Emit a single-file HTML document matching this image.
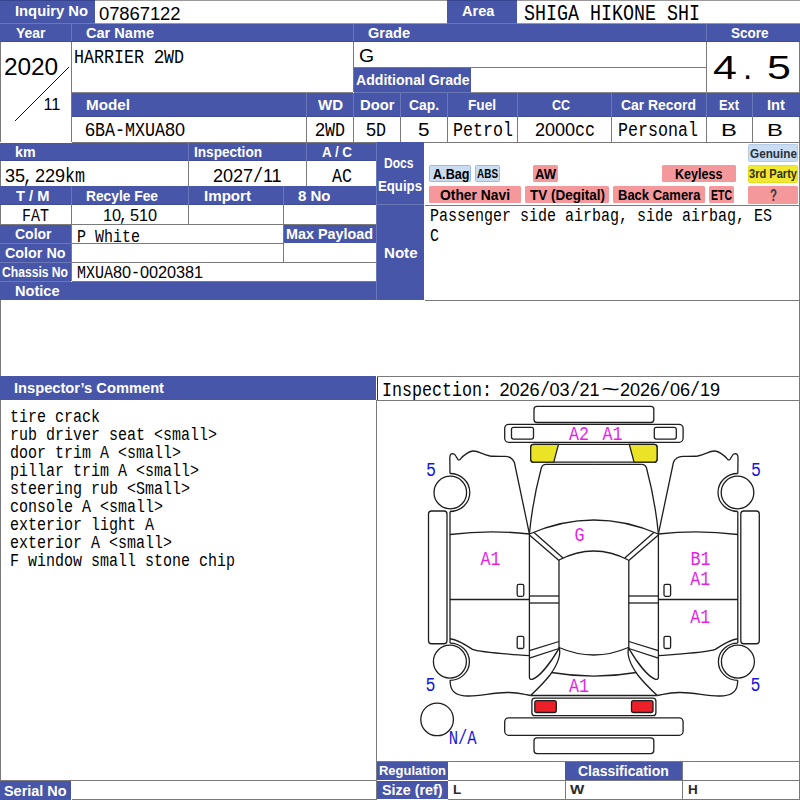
<!DOCTYPE html>
<html><head><meta charset="utf-8"><title>Sheet</title>
<style>
html,body{margin:0;padding:0;background:#fff;}
body{width:800px;height:800px;position:relative;overflow:hidden;font-family:"Liberation Sans",sans-serif;}
.a{position:absolute;}
.s{font-family:"Liberation Sans",sans-serif;font-weight:bold;white-space:pre;line-height:1;transform-origin:left top;}
.m{font-family:"Liberation Mono",monospace;white-space:pre;line-height:1;transform-origin:left top;}
.n{font-family:"Liberation Sans",sans-serif;white-space:pre;line-height:1;transform-origin:left top;}
</style></head><body>
<div class="a" style="left:95px;top:0px;width:352px;height:1px;background:#999"></div>
<div class="a" style="left:0px;top:0px;width:95px;height:23px;background:#4756a8;"></div>
<div class="a s" style="left:15.00px;top:3.96px;font-size:14px;color:#fff;transform:scaleX(1.0545)">Inquiry No</div>
<div class="a n" style="left:98.97px;top:4.81px;font-size:18.46px;letter-spacing:-0.069px;color:#000">07867122</div>
<div class="a" style="left:447px;top:0px;width:70px;height:23px;background:#4756a8;"></div>
<div class="a s" style="left:462.00px;top:4.16px;font-size:14px;color:#fff;transform:scaleX(1.0387)">Area</div>
<div class="a m" style="left:524.00px;top:4px;font-size:22px;color:#000;transform:scale(0.8333,1.0)">SHIGA HIKONE SHI</div>
<div class="a" style="left:95px;top:23px;width:352px;height:1px;background:#999"></div>
<div class="a" style="left:517px;top:23px;width:283px;height:1px;background:#999"></div>
<div class="a" style="left:0px;top:23px;width:95px;height:1px;background:#6b78b8"></div>
<div class="a" style="left:447px;top:23px;width:70px;height:1px;background:#6b78b8"></div>
<div class="a" style="left:0px;top:0px;width:95px;height:1px;background:#36448f"></div>
<div class="a" style="left:447px;top:0px;width:70px;height:1px;background:#36448f"></div>
<div class="a" style="left:517px;top:0px;width:283px;height:1px;background:#999"></div>
<div class="a" style="left:0px;top:24px;width:800px;height:18px;background:#4756a8;"></div>
<div class="a s" style="left:15.50px;top:26.16px;font-size:14px;color:#fff;transform:scaleX(0.9963)">Year</div>
<div class="a s" style="left:86.00px;top:26.16px;font-size:14px;color:#fff;transform:scaleX(1.0401)">Car Name</div>
<div class="a s" style="left:368.00px;top:26.16px;font-size:14px;color:#fff;transform:scaleX(1.0381)">Grade</div>
<div class="a s" style="left:730.50px;top:26.16px;font-size:14px;color:#fff;transform:scaleX(0.9635)">Score</div>
<div class="a" style="left:71px;top:24px;width:1px;height:18px;background:#6b78b8"></div>
<div class="a" style="left:353px;top:24px;width:1px;height:18px;background:#6b78b8"></div>
<div class="a" style="left:706px;top:24px;width:1px;height:18px;background:#6b78b8"></div>
<div class="a" style="left:0px;top:41px;width:800px;height:1px;background:#404c94"></div>
<div class="a" style="left:0px;top:42px;width:1px;height:100px;background:#7a7a7a"></div>
<div class="a" style="left:71px;top:42px;width:1px;height:100px;background:#7a7a7a"></div>
<div class="a n" style="left:3.95px;top:55.02px;font-size:24.44px;letter-spacing:-0.091px;color:#000">2020</div>
<div class="a n" style="left:43.47px;top:96.01px;font-size:16.29px;letter-spacing:-0.061px;color:#000">11</div>
<svg class="a" style="left:0;top:42px" width="72" height="100"><line x1="15" y1="79" x2="69" y2="25" stroke="#111" stroke-width="1"/></svg>
<div class="a m" style="left:74.00px;top:48px;font-size:20px;color:#000;transform:scale(0.8333,1.0)">HARRIER </div>
<div class="a n" style="left:153.96px;top:48.01px;font-size:18.10px;letter-spacing:-0.068px;color:#000">2</div>
<div class="a m" style="left:164.00px;top:48px;font-size:20px;color:#000;transform:scale(0.8333,1.0)">WD</div>
<div class="a" style="left:353px;top:42px;width:1px;height:50px;background:#7a7a7a"></div>
<div class="a n" style="left:359px;top:47px;font-size:18px;color:#000;transform:scale(1.08,1.0)">G</div>
<div class="a" style="left:354px;top:67px;width:352px;height:1px;background:#7a7a7a"></div>
<div class="a" style="left:354px;top:68px;width:117px;height:24px;background:#4756a8;"></div>
<div class="a s" style="left:355.50px;top:73.16px;font-size:14px;color:#fff;transform:scaleX(1.0065)">Additional Grade</div>
<div class="a" style="left:706px;top:42px;width:1px;height:50px;background:#7a7a7a"></div>
<div class="a" style="left:72px;top:92px;width:281px;height:1px;background:#8a8a8a"></div>
<div class="a" style="left:354px;top:92px;width:117px;height:1px;background:#6b78b8"></div>
<div class="a" style="left:471px;top:92px;width:329px;height:1px;background:#8a8a8a"></div>
<div class="a n" style="left:713px;top:50.5px;font-size:33px;color:#000;transform:scale(1.3,1.0)">4</div>
<div class="a n" style="left:743px;top:50.5px;font-size:33px;color:#000;transform:scale(1.0,1.0)">.</div>
<div class="a n" style="left:767px;top:50.5px;font-size:33px;color:#000;transform:scale(1.3,1.0)">5</div>
<div class="a" style="left:799px;top:42px;width:1px;height:100px;background:#7a7a7a"></div>
<div class="a" style="left:72px;top:93px;width:728px;height:24px;background:#4756a8;"></div>
<div class="a s" style="left:86.00px;top:98.16px;font-size:14px;color:#fff;transform:scaleX(1.0875)">Model</div>
<div class="a s" style="left:318.00px;top:98.16px;font-size:14px;color:#fff;transform:scaleX(1.0725)">WD</div>
<div class="a s" style="left:359.50px;top:98.16px;font-size:14px;color:#fff;transform:scaleX(1.0554)">Door</div>
<div class="a s" style="left:409.00px;top:98.16px;font-size:14px;color:#fff;transform:scaleX(0.9898)">Cap.</div>
<div class="a s" style="left:468.00px;top:98.16px;font-size:14px;color:#fff;transform:scaleX(0.9732)">Fuel</div>
<div class="a s" style="left:552.00px;top:98.16px;font-size:14px;color:#fff;transform:scaleX(0.8898)">CC</div>
<div class="a s" style="left:621.00px;top:98.16px;font-size:14px;color:#fff;transform:scaleX(0.9939)">Car Record</div>
<div class="a s" style="left:719.00px;top:98.16px;font-size:14px;color:#fff;transform:scaleX(0.9187)">Ext</div>
<div class="a s" style="left:767.00px;top:98.16px;font-size:14px;color:#fff;transform:scaleX(1.0539)">Int</div>
<div class="a" style="left:72px;top:116px;width:728px;height:1px;background:#404c94"></div>
<div class="a" style="left:306px;top:93px;width:1px;height:24px;background:#6b78b8"></div>
<div class="a" style="left:306px;top:117px;width:1px;height:25px;background:#7a7a7a"></div>
<div class="a" style="left:353px;top:93px;width:1px;height:24px;background:#6b78b8"></div>
<div class="a" style="left:353px;top:117px;width:1px;height:25px;background:#7a7a7a"></div>
<div class="a" style="left:400px;top:93px;width:1px;height:24px;background:#6b78b8"></div>
<div class="a" style="left:400px;top:117px;width:1px;height:25px;background:#7a7a7a"></div>
<div class="a" style="left:447px;top:93px;width:1px;height:24px;background:#6b78b8"></div>
<div class="a" style="left:447px;top:117px;width:1px;height:25px;background:#7a7a7a"></div>
<div class="a" style="left:517px;top:93px;width:1px;height:24px;background:#6b78b8"></div>
<div class="a" style="left:517px;top:117px;width:1px;height:25px;background:#7a7a7a"></div>
<div class="a" style="left:611px;top:93px;width:1px;height:24px;background:#6b78b8"></div>
<div class="a" style="left:611px;top:117px;width:1px;height:25px;background:#7a7a7a"></div>
<div class="a" style="left:706px;top:93px;width:1px;height:24px;background:#6b78b8"></div>
<div class="a" style="left:706px;top:117px;width:1px;height:25px;background:#7a7a7a"></div>
<div class="a" style="left:752px;top:93px;width:1px;height:24px;background:#6b78b8"></div>
<div class="a" style="left:752px;top:117px;width:1px;height:25px;background:#7a7a7a"></div>
<div class="a" style="left:72px;top:142px;width:728px;height:1px;background:#7a7a7a"></div>
<div class="a n" style="left:84.97px;top:121.01px;font-size:18.10px;letter-spacing:-0.068px;color:#000">6</div>
<div class="a m" style="left:95.00px;top:121px;font-size:20px;color:#000;transform:scale(0.8333,1.0)">BA-MXUA</div>
<div class="a n" style="left:164.96px;top:121.01px;font-size:18.10px;letter-spacing:-0.068px;color:#000">80</div>
<div class="a n" style="left:314.97px;top:121.01px;font-size:18.10px;letter-spacing:-0.068px;color:#000">2</div>
<div class="a m" style="left:325.00px;top:121px;font-size:20px;color:#000;transform:scale(0.8333,1.0)">WD</div>
<div class="a n" style="left:365.97px;top:121.01px;font-size:18.10px;letter-spacing:-0.068px;color:#000">5</div>
<div class="a m" style="left:376.00px;top:121px;font-size:20px;color:#000;transform:scale(0.8333,1.0)">D</div>
<div class="a n" style="left:418px;top:121px;font-size:18px;color:#000;transform:scale(1.15,1.0)">5</div>
<div class="a m" style="left:453.00px;top:121px;font-size:20px;color:#000;transform:scale(0.8333,1.0)">Petrol</div>
<div class="a n" style="left:534.97px;top:121.01px;font-size:18.10px;letter-spacing:-0.068px;color:#000">2000</div>
<div class="a m" style="left:575.00px;top:121px;font-size:20px;color:#000;transform:scale(0.8333,1.0)">cc</div>
<div class="a m" style="left:618.00px;top:121px;font-size:20px;color:#000;transform:scale(0.8333,1.0)">Personal</div>
<div class="a n" style="left:720.5px;top:122px;font-size:17px;color:#000;transform:scale(1.4,1.0)">B</div>
<div class="a n" style="left:767px;top:122px;font-size:17px;color:#000;transform:scale(1.4,1.0)">B</div>
<div class="a" style="left:0px;top:143px;width:376px;height:18px;background:#4756a8;"></div>
<div class="a s" style="left:14.50px;top:145.16px;font-size:14px;color:#fff;transform:scaleX(1.0133)">km</div>
<div class="a s" style="left:193.50px;top:145.16px;font-size:14px;color:#fff;transform:scaleX(0.9714)">Inspection</div>
<div class="a s" style="left:322.00px;top:145.16px;font-size:14px;color:#fff;transform:scaleX(0.9566)">A / C</div>
<div class="a" style="left:0px;top:160px;width:376px;height:1px;background:#404c94"></div>
<div class="a" style="left:188px;top:143px;width:1px;height:18px;background:#6b78b8"></div>
<div class="a" style="left:306px;top:143px;width:1px;height:18px;background:#6b78b8"></div>
<div class="a" style="left:188px;top:161px;width:1px;height:25px;background:#7a7a7a"></div>
<div class="a" style="left:306px;top:161px;width:1px;height:25px;background:#7a7a7a"></div>
<div class="a" style="left:0px;top:161px;width:1px;height:25px;background:#7a7a7a"></div>
<div class="a n" style="left:4.97px;top:167.01px;font-size:18.10px;letter-spacing:-0.068px;color:#000">35</div>
<div class="a m" style="left:23.00px;top:167px;font-size:20px;color:#000;transform:scale(0.8333,1.0)">,</div>
<div class="a n" style="left:34.96px;top:167.01px;font-size:18.10px;letter-spacing:-0.068px;color:#000">229</div>
<div class="a m" style="left:65.00px;top:167px;font-size:20px;color:#000;transform:scale(0.8333,1.0)">km</div>
<div class="a n" style="left:212.97px;top:167.01px;font-size:18.10px;letter-spacing:-0.068px;color:#000">2027</div>
<div class="a m" style="left:253.00px;top:167px;font-size:20px;color:#000;transform:scale(0.8333,1.0)">/</div>
<div class="a n" style="left:262.96px;top:167.01px;font-size:18.10px;letter-spacing:-0.068px;color:#000">11</div>
<div class="a m" style="left:332.00px;top:167px;font-size:20px;color:#000;transform:scale(0.8333,1.0)">AC</div>
<div class="a" style="left:0px;top:186px;width:376px;height:19px;background:#4756a8;"></div>
<div class="a s" style="left:15.50px;top:188.66px;font-size:14px;color:#fff;transform:scaleX(1.0518)">T / M</div>
<div class="a s" style="left:86.00px;top:188.66px;font-size:14px;color:#fff;transform:scaleX(0.9843)">Recyle Fee</div>
<div class="a s" style="left:204.00px;top:188.66px;font-size:14px;color:#fff;transform:scaleX(1.0795)">Import</div>
<div class="a s" style="left:297.50px;top:188.66px;font-size:14px;color:#fff;transform:scaleX(1.0723)">8 No</div>
<div class="a" style="left:0px;top:204px;width:376px;height:1px;background:#404c94"></div>
<div class="a" style="left:71px;top:186px;width:1px;height:19px;background:#6b78b8"></div>
<div class="a" style="left:188px;top:186px;width:1px;height:19px;background:#6b78b8"></div>
<div class="a" style="left:283px;top:186px;width:1px;height:19px;background:#6b78b8"></div>
<div class="a" style="left:0px;top:205px;width:1px;height:19px;background:#7a7a7a"></div>
<div class="a" style="left:71px;top:205px;width:1px;height:19px;background:#7a7a7a"></div>
<div class="a" style="left:188px;top:205px;width:1px;height:19px;background:#7a7a7a"></div>
<div class="a" style="left:283px;top:205px;width:1px;height:19px;background:#7a7a7a"></div>
<div class="a" style="left:0px;top:224px;width:376px;height:1px;background:#7a7a7a"></div>
<div class="a m" style="left:22.00px;top:207px;font-size:18px;color:#000;transform:scale(0.8333,1.0)">FAT</div>
<div class="a n" style="left:102.97px;top:207.01px;font-size:16.29px;letter-spacing:-0.061px;color:#000">10</div>
<div class="a m" style="left:119.00px;top:207px;font-size:18px;color:#000;transform:scale(0.8333,1.0)">,</div>
<div class="a n" style="left:129.97px;top:207.01px;font-size:16.29px;letter-spacing:-0.061px;color:#000">510</div>
<div class="a" style="left:0px;top:225px;width:71px;height:18px;background:#4756a8;"></div>
<div class="a s" style="left:14.50px;top:227.16px;font-size:14px;color:#fff;transform:scaleX(0.9989)">Color</div>
<div class="a" style="left:0px;top:244px;width:71px;height:18px;background:#4756a8;"></div>
<div class="a s" style="left:5.00px;top:246.16px;font-size:14px;color:#fff;transform:scaleX(1.0240)">Color No</div>
<div class="a" style="left:0px;top:263px;width:71px;height:18px;background:#4756a8;"></div>
<div class="a s" style="left:2.00px;top:265.16px;font-size:14px;color:#fff;transform:scaleX(0.8658)">Chassis No</div>
<div class="a" style="left:0px;top:243px;width:71px;height:1px;background:#6b78b8"></div>
<div class="a" style="left:0px;top:262px;width:71px;height:1px;background:#6b78b8"></div>
<div class="a" style="left:0px;top:281px;width:71px;height:1px;background:#6b78b8"></div>
<div class="a" style="left:71px;top:225px;width:1px;height:56px;background:#6b78b8"></div>
<div class="a m" style="left:77.00px;top:228px;font-size:18px;color:#000;transform:scale(0.8333,1.0)">P White</div>
<div class="a" style="left:283px;top:225px;width:93px;height:18px;background:#4756a8;"></div>
<div class="a s" style="left:286.00px;top:227.16px;font-size:14px;color:#fff;transform:scaleX(1.0255)">Max Payload</div>
<div class="a" style="left:283px;top:225px;width:1px;height:37px;background:#7a7a7a"></div>
<div class="a" style="left:72px;top:243px;width:211px;height:1px;background:#7a7a7a"></div>
<div class="a" style="left:72px;top:262px;width:304px;height:1px;background:#7a7a7a"></div>
<div class="a" style="left:72px;top:281px;width:304px;height:1px;background:#7a7a7a"></div>
<div class="a m" style="left:77.00px;top:264px;font-size:18px;color:#000;transform:scale(0.8333,1.0)">MXUA</div>
<div class="a n" style="left:112.97px;top:264.01px;font-size:16.29px;letter-spacing:-0.061px;color:#000">80</div>
<div class="a m" style="left:131.00px;top:264px;font-size:18px;color:#000;transform:scale(0.8333,1.0)">-</div>
<div class="a n" style="left:139.97px;top:264.01px;font-size:16.29px;letter-spacing:-0.061px;color:#000">0020381</div>
<div class="a" style="left:0px;top:282px;width:376px;height:18px;background:#4756a8;"></div>
<div class="a s" style="left:14.50px;top:284.16px;font-size:14px;color:#fff;transform:scaleX(1.0404)">Notice</div>
<div class="a" style="left:377px;top:142px;width:47px;height:62px;background:#4756a8;"></div>
<div class="a s" style="left:383.50px;top:155.66px;font-size:14px;color:#fff;transform:scaleX(0.8618)">Docs</div>
<div class="a s" style="left:378.00px;top:178.66px;font-size:14px;color:#fff;transform:scaleX(0.9424)">Equips</div>
<div class="a" style="left:377px;top:205px;width:47px;height:95px;background:#4756a8;"></div>
<div class="a s" style="left:383.50px;top:246.16px;font-size:14px;color:#fff;transform:scaleX(1.0779)">Note</div>
<div class="a" style="left:376px;top:142px;width:1px;height:158px;background:#6b78b8"></div>
<div class="a" style="left:377px;top:204px;width:47px;height:1px;background:#6b78b8"></div>
<div class="a" style="left:425px;top:205px;width:375px;height:1px;background:#7a7a7a"></div>
<div class="a" style="left:425px;top:300px;width:375px;height:1px;background:#7a7a7a"></div>
<div class="a" style="left:799px;top:142px;width:1px;height:658px;background:#7a7a7a"></div>
<div class="a" style="left:377px;top:376px;width:423px;height:1px;background:#7a7a7a"></div>
<div class="a" style="left:0px;top:300px;width:1px;height:76px;background:#7a7a7a"></div>
<div class="a" style="left:429px;top:165px;width:42px;height:17px;background:#c9dcf2;border-radius:1.5px;border:1px solid #9db9dc;box-sizing:border-box;"></div>
<div class="a s" style="left:432.50px;top:166.92px;font-size:14.5px;color:#000;transform:scaleX(0.8710)">A.Bag</div>
<div class="a" style="left:475px;top:165px;width:25px;height:17px;background:#c9dcf2;border-radius:1.5px;border:1px solid #9db9dc;box-sizing:border-box;"></div>
<div class="a s" style="left:477.00px;top:168.14px;font-size:12px;color:#000;transform:scaleX(0.8294)">ABS</div>
<div class="a" style="left:533px;top:165px;width:25px;height:17px;background:#f4989c;border-radius:1.5px;"></div>
<div class="a s" style="left:535.00px;top:166.92px;font-size:14.5px;color:#000;transform:scaleX(0.8996)">AW</div>
<div class="a" style="left:662px;top:165px;width:74px;height:17px;background:#f4989c;border-radius:1.5px;"></div>
<div class="a s" style="left:675.00px;top:166.92px;font-size:14.5px;color:#000;transform:scaleX(0.8666)">Keyless</div>
<div class="a" style="left:429px;top:186px;width:92px;height:17px;background:#f4989c;border-radius:1.5px;"></div>
<div class="a s" style="left:440.00px;top:187.92px;font-size:14.5px;color:#000;transform:scaleX(0.9550)">Other Navi</div>
<div class="a" style="left:525px;top:186px;width:84px;height:17px;background:#f4989c;border-radius:1.5px;"></div>
<div class="a s" style="left:530.00px;top:187.92px;font-size:14.5px;color:#000;transform:scaleX(0.9311)">TV (Degital)</div>
<div class="a" style="left:613px;top:186px;width:92px;height:17px;background:#f4989c;border-radius:1.5px;"></div>
<div class="a s" style="left:617.50px;top:187.92px;font-size:14.5px;color:#000;transform:scaleX(0.8967)">Back Camera</div>
<div class="a" style="left:709px;top:186px;width:25px;height:17px;background:#f4989c;border-radius:1.5px;"></div>
<div class="a s" style="left:711.00px;top:188.16px;font-size:14px;color:#000;transform:scaleX(0.7500)">ETC</div>
<div class="a" style="left:748px;top:144px;width:50px;height:18px;background:#c9dcf2;border-radius:1.5px;border:1px solid #b4cbe8;box-sizing:border-box;"></div>
<div class="a s" style="left:750.00px;top:147.15px;font-size:13px;color:#2b2f3a;transform:scaleX(0.9038)">Genuine</div>
<div class="a" style="left:748px;top:165px;width:50px;height:18px;background:#f0e832;border-radius:1.5px;border:1px solid #e4dc28;box-sizing:border-box;"></div>
<div class="a s" style="left:749.00px;top:168.39px;font-size:12.5px;color:#33300a;transform:scaleX(0.8858)">3rd Party</div>
<div class="a" style="left:748px;top:186px;width:50px;height:18px;background:#f4989c;border-radius:1.5px;"></div>
<div class="a s" style="left:769.50px;top:187.20px;font-size:17px;color:#3a3a3a;transform:scaleX(0.6750)">?</div>
<div class="a m" style="left:430.00px;top:207px;font-size:18px;color:#000;transform:scale(0.8333,1.0)">Passenger side airbag, side airbag, ES</div>
<div class="a m" style="left:430.00px;top:226.5px;font-size:18px;color:#000;transform:scale(0.8333,1.0)">C</div>
<div class="a" style="left:0px;top:376px;width:376px;height:24px;background:#4756a8;"></div>
<div class="a s" style="left:14.00px;top:380.76px;font-size:14px;color:#fff;transform:scaleX(1.0479)">Inspector&rsquo;s Comment</div>
<div class="a" style="left:0px;top:400px;width:1px;height:380px;background:#7a7a7a"></div>
<div class="a" style="left:376px;top:400px;width:1px;height:400px;background:#7a7a7a"></div>
<div class="a m" style="left:10.00px;top:408.25px;font-size:18px;color:#000;transform:scale(0.8333,1.0)">tire crack</div>
<div class="a m" style="left:10.00px;top:426.18px;font-size:18px;color:#000;transform:scale(0.8333,1.0)">rub driver seat &lt;small&gt;</div>
<div class="a m" style="left:10.00px;top:444.11px;font-size:18px;color:#000;transform:scale(0.8333,1.0)">door trim A &lt;small&gt;</div>
<div class="a m" style="left:10.00px;top:462.04px;font-size:18px;color:#000;transform:scale(0.8333,1.0)">pillar trim A &lt;small&gt;</div>
<div class="a m" style="left:10.00px;top:479.97px;font-size:18px;color:#000;transform:scale(0.8333,1.0)">steering rub &lt;Small&gt;</div>
<div class="a m" style="left:10.00px;top:497.9px;font-size:18px;color:#000;transform:scale(0.8333,1.0)">console A &lt;small&gt;</div>
<div class="a m" style="left:10.00px;top:515.83px;font-size:18px;color:#000;transform:scale(0.8333,1.0)">exterior light A</div>
<div class="a m" style="left:10.00px;top:533.76px;font-size:18px;color:#000;transform:scale(0.8333,1.0)">exterior A &lt;small&gt;</div>
<div class="a m" style="left:10.00px;top:551.69px;font-size:18px;color:#000;transform:scale(0.8333,1.0)">F window small stone chip</div>
<div class="a" style="left:0px;top:780px;width:376px;height:1px;background:#7a7a7a"></div>
<div class="a" style="left:0px;top:781px;width:71px;height:19px;background:#4756a8;"></div>
<div class="a s" style="left:4.00px;top:783.66px;font-size:14px;color:#fff;transform:scaleX(1.0298)">Serial No</div>
<div class="a" style="left:72px;top:799px;width:304px;height:1px;background:#7a7a7a"></div>
<div class="a" style="left:377px;top:377px;width:1px;height:23px;background:#334"></div>
<div class="a" style="left:377px;top:400px;width:423px;height:1px;background:#7a7a7a"></div>
<div class="a m" style="left:382.00px;top:381px;font-size:20px;color:#000;transform:scale(0.8333,1.0)">Inspection:</div>
<div class="a n" style="left:499.47px;top:381.01px;font-size:18.10px;letter-spacing:-0.068px;color:#000">2026</div>
<div class="a m" style="left:539.50px;top:381px;font-size:20px;color:#000;transform:scale(0.8333,1.0)">/</div>
<div class="a n" style="left:549.46px;top:381.01px;font-size:18.10px;letter-spacing:-0.068px;color:#000">03</div>
<div class="a m" style="left:569.50px;top:381px;font-size:20px;color:#000;transform:scale(0.8333,1.0)">/</div>
<div class="a n" style="left:579.46px;top:381.01px;font-size:18.10px;letter-spacing:-0.068px;color:#000">21</div>
<div class="a m" style="left:600.50px;top:381px;font-size:20px;color:#000;transform:scale(1.6,1.0)">~</div>
<div class="a n" style="left:619.97px;top:381.01px;font-size:18.10px;letter-spacing:-0.068px;color:#000">2026</div>
<div class="a m" style="left:660.00px;top:381px;font-size:20px;color:#000;transform:scale(0.8333,1.0)">/</div>
<div class="a n" style="left:669.96px;top:381.01px;font-size:18.10px;letter-spacing:-0.068px;color:#000">06</div>
<div class="a m" style="left:690.00px;top:381px;font-size:20px;color:#000;transform:scale(0.8333,1.0)">/</div>
<div class="a n" style="left:699.96px;top:381.01px;font-size:18.10px;letter-spacing:-0.068px;color:#000">19</div>
<div class="a" style="left:377px;top:761px;width:423px;height:1px;background:#7a7a7a"></div>
<div class="a" style="left:377px;top:762px;width:71px;height:18px;background:#4756a8;"></div>
<div class="a s" style="left:379.00px;top:764.41px;font-size:13.5px;color:#fff;transform:scaleX(0.9609)">Regulation</div>
<div class="a" style="left:448px;top:780px;width:352px;height:1px;background:#7a7a7a"></div>
<div class="a" style="left:377px;top:781px;width:71px;height:18px;background:#4756a8;"></div>
<div class="a s" style="left:382.00px;top:783.16px;font-size:14px;color:#fff;transform:scaleX(1.0228)">Size (ref)</div>
<div class="a" style="left:565px;top:762px;width:117px;height:18px;background:#4756a8;"></div>
<div class="a s" style="left:578.00px;top:764.16px;font-size:14px;color:#fff;transform:scaleX(0.9967)">Classification</div>
<div class="a" style="left:565px;top:781px;width:1px;height:18px;background:#7a7a7a"></div>
<div class="a" style="left:682px;top:762px;width:1px;height:37px;background:#7a7a7a"></div>
<div class="a" style="left:448px;top:799px;width:352px;height:1px;background:#7a7a7a"></div>
<div class="a n" style="left:453px;top:783px;font-size:13.5px;color:#2a2a2a;font-weight:bold;transform:scale(1.0,1.0)">L</div>
<div class="a n" style="left:570px;top:783px;font-size:13.5px;color:#2a2a2a;font-weight:bold;transform:scale(1.12,1.0)">W</div>
<div class="a n" style="left:688px;top:783px;font-size:13.5px;color:#2a2a2a;font-weight:bold;transform:scale(1.0,1.0)">H</div>
<svg class="a" style="left:0;top:0" width="800" height="800" viewBox="0 0 800 800">
<rect x="534" y="406.3" width="119.79999999999995" height="16.19999999999999" rx="3" fill="#fff" stroke="#1e1e1e" stroke-width="1.3"/>
<rect x="504.7" y="424.4" width="178.40000000000003" height="17.900000000000034" rx="4" fill="#fff" stroke="#1e1e1e" stroke-width="1.3"/>
<rect x="531.9" y="698.1" width="124.0" height="17.600000000000023" rx="3" fill="#fff" stroke="#1e1e1e" stroke-width="1.3"/>
<path d="M530.6,695.5 L657.2,695.5" stroke="#1e1e1e" stroke-width="1.3" fill="none"/>
<rect x="504.7" y="717.8" width="178.40000000000003" height="17.5" rx="4" fill="#fff" stroke="#1e1e1e" stroke-width="1.3"/>
<rect x="534" y="737.8" width="119.79999999999995" height="15.800000000000068" rx="3" fill="#fff" stroke="#1e1e1e" stroke-width="1.3"/>
<rect x="530.7" y="444.4" width="126.39999999999998" height="17.80000000000001" rx="3" fill="#fff" stroke="#1e1e1e" stroke-width="1.3"/>
<path d="M529.5,534 Q593.9,506 658.3,534" stroke="#1e1e1e" stroke-width="1.3" fill="none"/>
<path d="M559,560 Q593.9,542 628.3,560" stroke="#1e1e1e" stroke-width="1.3" fill="none"/>
<path d="M559,647.5 Q593.9,662.5 628.3,647.5" stroke="#1e1e1e" stroke-width="1.3" fill="none"/>
<path d="M551.5,672.5 Q593.9,679.8 636.3,672.5" stroke="#1e1e1e" stroke-width="1.3" fill="none"/>
<circle cx="437.1" cy="719.4" r="16.3" fill="#fff" stroke="#1e1e1e" stroke-width="1.3"/>
<g id="h">
<rect x="511.5" y="427.3" width="22.0" height="11.800000000000011" rx="2" fill="#fff" stroke="#1e1e1e" stroke-width="1.3"/>
<path d="M533.7,444.4 L558.5,444.4 L553.75,462.2 L533.7,462.2 Q530.7,462.2 530.7,459.2 L530.7,447.4 Q530.7,444.4 533.7,444.4 Z" fill="#ebe325" stroke="#1e1e1e" stroke-width="1.3"/>
<path d="M546,464.4 L593.9,464.4" fill="none" stroke="#1e1e1e" stroke-width="1.3"/>
<path d="M546,464.4 Q542.5,464.4 541.3,468 C536.5,486 531.5,512 529.4,534" fill="none" stroke="#1e1e1e" stroke-width="1.3"/>
<path d="M450,473.5 L449.8,458 Q449.8,453.7 452.7,453.7 Q454.8,453.9 455.8,456 L457.8,459.3 Q458.8,460.6 460.3,459.2 Q466,452.5 472.5,451 Q476,450.8 481.3,453.1 Q486,455 490,456 Q494,456.4 505,456.3 Q512,456.5 514.4,462.5 L529.4,533.8" fill="none" stroke="#1e1e1e" stroke-width="1.3"/>
<circle cx="450.3" cy="492.5" r="16.3" fill="#fff" stroke="#1e1e1e" stroke-width="1.3"/>
<path d="M450,473.5 A19.8,19 0 0 1 450,511.5" fill="none" stroke="#1e1e1e" stroke-width="1.3"/>
<circle cx="449.9" cy="661.6" r="16.5" fill="#fff" stroke="#1e1e1e" stroke-width="1.3"/>
<path d="M450,643.1 A19.4,18.6 0 0 1 450,680.3" fill="none" stroke="#1e1e1e" stroke-width="1.3"/>
<rect x="428.5" y="511" width="18.5" height="132.75" rx="3" fill="#fff" stroke="#1e1e1e" stroke-width="1.3"/>
<path d="M450,511.5 L450,643.1" fill="none" stroke="#1e1e1e" stroke-width="1.3"/>
<path d="M450,534.5 Q490,529.5 529.4,534" fill="none" stroke="#1e1e1e" stroke-width="1.3"/>
<path d="M529.4,534 L529.4,677 Q529.4,679.6 532.2,679.4 C540,676.5 551,662 558.9,648.6" fill="none" stroke="#1e1e1e" stroke-width="1.3"/>
<path d="M450,599.5 L529,599.5" fill="none" stroke="#1e1e1e" stroke-width="1.3"/>
<rect x="517.2" y="584.4" width="6.599999999999909" height="11.899999999999977" rx="1.5" fill="#fff" stroke="#1e1e1e" stroke-width="1.3"/>
<rect x="517.2" y="636.3" width="6.599999999999909" height="12.200000000000045" rx="1.5" fill="#fff" stroke="#1e1e1e" stroke-width="1.3"/>
<path d="M529.4,535 L559,560.5" fill="none" stroke="#1e1e1e" stroke-width="1.3"/>
<path d="M534,532.5 L563,558" fill="none" stroke="#1e1e1e" stroke-width="1.3"/>
<path d="M559,560 L559,648" fill="none" stroke="#1e1e1e" stroke-width="1.3"/>
<path d="M529.4,596 L559,596" fill="none" stroke="#1e1e1e" stroke-width="1.3"/>
<path d="M529.4,603 L559,603" fill="none" stroke="#1e1e1e" stroke-width="1.3"/>
<path d="M529.4,650.6 L559,641.5" fill="none" stroke="#1e1e1e" stroke-width="1.3"/>
<path d="M529.4,658.1 L559,648.5" fill="none" stroke="#1e1e1e" stroke-width="1.3"/>
<path d="M559,647 C561.5,655 556.5,666 550,675 C545,681.5 538,688.5 530.6,695.5" fill="none" stroke="#1e1e1e" stroke-width="1.3"/>
<path d="M450,638.75 C456,639.5 463,643 472.5,649.4 C480,652.5 500,653.5 529.4,655.6" fill="none" stroke="#1e1e1e" stroke-width="1.3"/>
<path d="M450,680.3 L450.5,685 C451.5,692 457,696 468,696 C480,696.3 494,692.3 507.5,692.5 C515,692.3 521,693.5 525,694.4 L530.6,695.5" fill="none" stroke="#1e1e1e" stroke-width="1.3"/>
<rect x="534.8" y="700.6" width="21.5" height="11.899999999999977" rx="2" fill="#ec2028" stroke="#1e1e1e" stroke-width="1.3"/>
</g>
<g transform="translate(1187.8,0) scale(-1,1)">
<rect x="511.5" y="427.3" width="22.0" height="11.800000000000011" rx="2" fill="#fff" stroke="#1e1e1e" stroke-width="1.3"/>
<path d="M533.7,444.4 L558.5,444.4 L553.75,462.2 L533.7,462.2 Q530.7,462.2 530.7,459.2 L530.7,447.4 Q530.7,444.4 533.7,444.4 Z" fill="#ebe325" stroke="#1e1e1e" stroke-width="1.3"/>
<path d="M546,464.4 L593.9,464.4" fill="none" stroke="#1e1e1e" stroke-width="1.3"/>
<path d="M546,464.4 Q542.5,464.4 541.3,468 C536.5,486 531.5,512 529.4,534" fill="none" stroke="#1e1e1e" stroke-width="1.3"/>
<path d="M450,473.5 L449.8,458 Q449.8,453.7 452.7,453.7 Q454.8,453.9 455.8,456 L457.8,459.3 Q458.8,460.6 460.3,459.2 Q466,452.5 472.5,451 Q476,450.8 481.3,453.1 Q486,455 490,456 Q494,456.4 505,456.3 Q512,456.5 514.4,462.5 L529.4,533.8" fill="none" stroke="#1e1e1e" stroke-width="1.3"/>
<circle cx="450.3" cy="492.5" r="16.3" fill="#fff" stroke="#1e1e1e" stroke-width="1.3"/>
<path d="M450,473.5 A19.8,19 0 0 1 450,511.5" fill="none" stroke="#1e1e1e" stroke-width="1.3"/>
<circle cx="449.9" cy="661.6" r="16.5" fill="#fff" stroke="#1e1e1e" stroke-width="1.3"/>
<path d="M450,643.1 A19.4,18.6 0 0 1 450,680.3" fill="none" stroke="#1e1e1e" stroke-width="1.3"/>
<rect x="428.5" y="511" width="18.5" height="132.75" rx="3" fill="#fff" stroke="#1e1e1e" stroke-width="1.3"/>
<path d="M450,511.5 L450,643.1" fill="none" stroke="#1e1e1e" stroke-width="1.3"/>
<path d="M450,534.5 Q490,529.5 529.4,534" fill="none" stroke="#1e1e1e" stroke-width="1.3"/>
<path d="M529.4,534 L529.4,677 Q529.4,679.6 532.2,679.4 C540,676.5 551,662 558.9,648.6" fill="none" stroke="#1e1e1e" stroke-width="1.3"/>
<path d="M450,599.5 L529,599.5" fill="none" stroke="#1e1e1e" stroke-width="1.3"/>
<rect x="517.2" y="584.4" width="6.599999999999909" height="11.899999999999977" rx="1.5" fill="#fff" stroke="#1e1e1e" stroke-width="1.3"/>
<rect x="517.2" y="636.3" width="6.599999999999909" height="12.200000000000045" rx="1.5" fill="#fff" stroke="#1e1e1e" stroke-width="1.3"/>
<path d="M529.4,535 L559,560.5" fill="none" stroke="#1e1e1e" stroke-width="1.3"/>
<path d="M534,532.5 L563,558" fill="none" stroke="#1e1e1e" stroke-width="1.3"/>
<path d="M559,560 L559,648" fill="none" stroke="#1e1e1e" stroke-width="1.3"/>
<path d="M529.4,596 L559,596" fill="none" stroke="#1e1e1e" stroke-width="1.3"/>
<path d="M529.4,603 L559,603" fill="none" stroke="#1e1e1e" stroke-width="1.3"/>
<path d="M529.4,650.6 L559,641.5" fill="none" stroke="#1e1e1e" stroke-width="1.3"/>
<path d="M529.4,658.1 L559,648.5" fill="none" stroke="#1e1e1e" stroke-width="1.3"/>
<path d="M559,647 C561.5,655 556.5,666 550,675 C545,681.5 538,688.5 530.6,695.5" fill="none" stroke="#1e1e1e" stroke-width="1.3"/>
<path d="M450,638.75 C456,639.5 463,643 472.5,649.4 C480,652.5 500,653.5 529.4,655.6" fill="none" stroke="#1e1e1e" stroke-width="1.3"/>
<path d="M450,680.3 L450.5,685 C451.5,692 457,696 468,696 C480,696.3 494,692.3 507.5,692.5 C515,692.3 521,693.5 525,694.4 L530.6,695.5" fill="none" stroke="#1e1e1e" stroke-width="1.3"/>
<rect x="534.8" y="700.6" width="21.5" height="11.899999999999977" rx="2" fill="#ec2028" stroke="#1e1e1e" stroke-width="1.3"/>
</g>
<text transform="translate(431,475.5) scale(0.8333,1)" text-anchor="middle" font-family="Liberation Mono, monospace" font-size="20" fill="#1616d8">5</text>
<text transform="translate(756,475.5) scale(0.8333,1)" text-anchor="middle" font-family="Liberation Mono, monospace" font-size="20" fill="#1616d8">5</text>
<text transform="translate(430.5,690.5) scale(0.8333,1)" text-anchor="middle" font-family="Liberation Mono, monospace" font-size="20" fill="#1616d8">5</text>
<text transform="translate(755.5,690.5) scale(0.8333,1)" text-anchor="middle" font-family="Liberation Mono, monospace" font-size="20" fill="#1616d8">5</text>
<text transform="translate(579,439.5) scale(0.8333,1)" text-anchor="middle" font-family="Liberation Mono, monospace" font-size="20" fill="#e61fe6">A2</text>
<text transform="translate(612.5,439.5) scale(0.8333,1)" text-anchor="middle" font-family="Liberation Mono, monospace" font-size="20" fill="#e61fe6">A1</text>
<text transform="translate(490.5,564.5) scale(0.8333,1)" text-anchor="middle" font-family="Liberation Mono, monospace" font-size="20" fill="#e61fe6">A1</text>
<text transform="translate(579.5,540.5) scale(0.8333,1)" text-anchor="middle" font-family="Liberation Mono, monospace" font-size="20" fill="#e61fe6">G</text>
<text transform="translate(700.5,564.5) scale(0.8333,1)" text-anchor="middle" font-family="Liberation Mono, monospace" font-size="20" fill="#e61fe6">B1</text>
<text transform="translate(700.3,584.5) scale(0.8333,1)" text-anchor="middle" font-family="Liberation Mono, monospace" font-size="20" fill="#e61fe6">A1</text>
<text transform="translate(700.3,622.7) scale(0.8333,1)" text-anchor="middle" font-family="Liberation Mono, monospace" font-size="20" fill="#e61fe6">A1</text>
<text transform="translate(579,691.5) scale(0.8333,1)" text-anchor="middle" font-family="Liberation Mono, monospace" font-size="20" fill="#e61fe6">A1</text>
<text transform="translate(462.7,743.8) scale(0.74,1)" text-anchor="middle" font-family="Liberation Mono, monospace" font-size="21" fill="#1616d8">N/A</text>
</svg>
</body></html>
